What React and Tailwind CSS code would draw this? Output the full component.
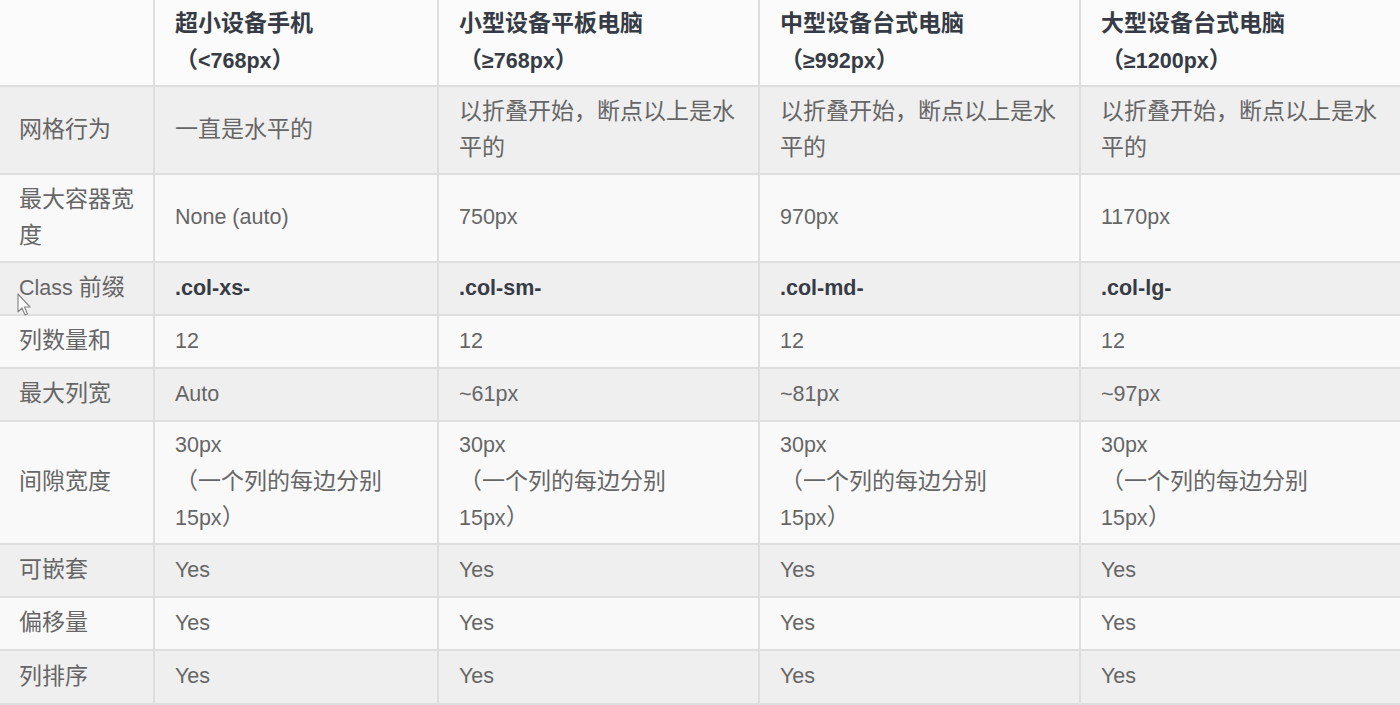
import React from "react";

const heads = [
  ["超小设备手机", "（<768px）"],
  ["小型设备平板电脑", "（≥768px）"],
  ["中型设备台式电脑", "（≥992px）"],
  ["大型设备台式电脑", "（≥1200px）"],
];

const rows = [
  {
    label: ["网格行为"],
    cells: [
      ["一直是水平的"],
      ["以折叠开始，断点以上是水", "平的"],
      ["以折叠开始，断点以上是水", "平的"],
      ["以折叠开始，断点以上是水", "平的"],
    ],
  },
  {
    label: ["最大容器宽", "度"],
    cells: [["None (auto)"], ["750px"], ["970px"], ["1170px"]],
  },
  {
    label: ["Class 前缀"],
    cells: [[".col-xs-"], [".col-sm-"], [".col-md-"], [".col-lg-"]],
    bold: true,
  },
  { label: ["列数量和"], cells: [["12"], ["12"], ["12"], ["12"]] },
  { label: ["最大列宽"], cells: [["Auto"], ["~61px"], ["~81px"], ["~97px"]] },
  {
    label: ["间隙宽度"],
    cells: Array(4).fill(["30px", "（一个列的每边分别", "15px）"]),
  },
  { label: ["可嵌套"], cells: [["Yes"], ["Yes"], ["Yes"], ["Yes"]] },
  { label: ["偏移量"], cells: [["Yes"], ["Yes"], ["Yes"], ["Yes"]] },
  { label: ["列排序"], cells: [["Yes"], ["Yes"], ["Yes"], ["Yes"]] },
];

// CJK glyphs in the shot are a touch larger than the latin ones
function Mixed({ text }) {
  const parts = text.split(/([\u3000-\u9fff\uff00-\uffef]+)/);
  return parts.map((p, i) =>
    /[\u3000-\u9fff\uff00-\uffef]/.test(p) ? (
      <span key={i} className="text-[23px]">
        {p}
      </span>
    ) : (
      <span key={i}>{p}</span>
    )
  );
}

function Cell({ lines, bg, bold, first }) {
  return (
    <div
      className={`flex flex-col justify-center border-b-2 border-r-2 border-[#dedede] ${bg} ${
        first ? "pl-[19px]" : "pl-[20px]"
      } leading-[35.5px] whitespace-nowrap overflow-hidden ${
        bold ? "font-bold text-[#363b45]" : "text-[#666666]"
      }`}
    >
      {lines.map((l, i) => (
        <div key={i}>
          <Mixed text={l} />
        </div>
      ))}
    </div>
  );
}

export default function App() {
  return (
    <div
      className="relative w-[1400px] h-[705px] overflow-hidden bg-[#f9f9f9] text-[21.5px]"
      style={{ fontFamily: '"Liberation Sans", "Noto Sans CJK SC", sans-serif' }}
    >
      <div className="grid grid-cols-[155px_284px_321px_321px_321px] grid-rows-[87px_88px_88px_53px_53px_53px_123px_53px_53px_54px]">
        <Cell lines={[""]} bg="bg-[#fbfbfb]" first />
        {heads.map((h, i) => (
          <Cell key={i} lines={h} bg="bg-[#fbfbfb]" bold />
        ))}
        {rows.map((r, ri) => {
          const bg = ri % 2 === 0 ? "bg-[#efefef]" : "bg-[#f9f9f9]";
          return (
            <React.Fragment key={ri}>
              <Cell lines={r.label} bg={bg} first />
              {r.cells.map((c, ci) => (
                <Cell key={ci} lines={c} bg={bg} bold={r.bold} />
              ))}
            </React.Fragment>
          );
        })}
      </div>
      <svg
        className="absolute left-[17px] top-[293px]"
        width="14"
        height="24"
        viewBox="0 0 14 24"
      >
        <path
          d="M1 1 L1 19 L5 15 L8 22 L10.5 21 L7.5 14 L13 14 Z"
          fill="#fafafa"
          stroke="#8a8a8a"
          strokeWidth="1.2"
          strokeLinejoin="round"
        />
      </svg>
    </div>
  );
}
